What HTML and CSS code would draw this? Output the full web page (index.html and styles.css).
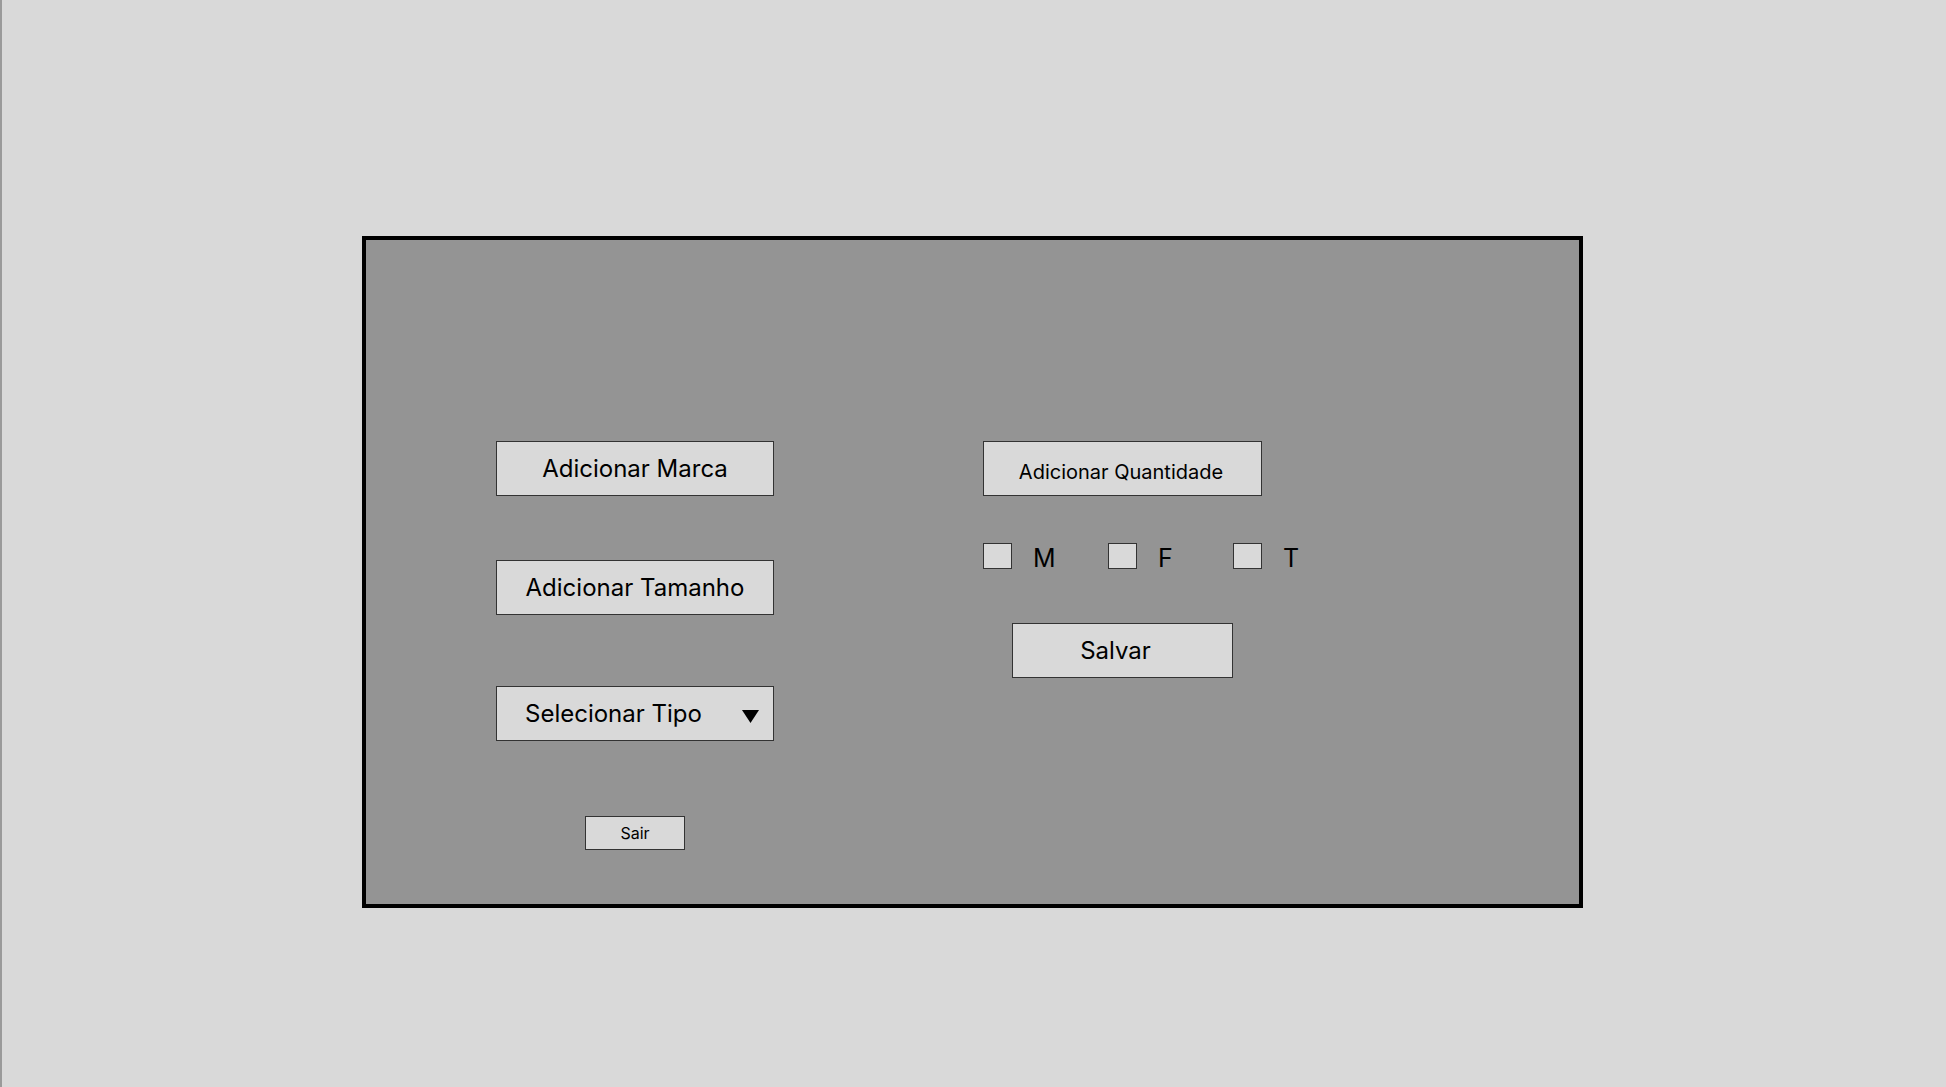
FILE: index.html
```html
<!DOCTYPE html>
<html lang="pt">
<head>
<meta charset="utf-8">
<title>Cadastro</title>
<link rel="stylesheet" href="styles.css">
</head>
<body>
<div class="page">
  <div class="panel">
    <div class="col-left">
      <button class="btn btn-lg">Adicionar Marca</button>
      <button class="btn btn-lg gap-tamanho">Adicionar Tamanho</button>
      <div class="btn select gap-tipo">
        <span>Selecionar Tipo</span>
        <svg class="caret" width="17" height="13" viewBox="0 0 17 13"><polygon points="0,0 17,0 8.5,13" fill="#000"/></svg>
      </div>
      <button class="btn btn-sm gap-sair">Sair</button>
    </div>
    <div class="col-right">
      <button class="btn btn-qty">Adicionar Quantidade</button>
      <div class="checks">
        <label class="check"><span class="box"></span><span class="lbl">M</span></label>
        <label class="check"><span class="box"></span><span class="lbl">F</span></label>
        <label class="check"><span class="box"></span><span class="lbl">T</span></label>
      </div>
      <button class="btn btn-save">Salvar</button>
    </div>
  </div>
</div>
</body>
</html>
```

FILE: styles.css
```css
html, body {
  margin: 0;
  padding: 0;
}
body {
  background: #d9d9d9;
  font-family: Inter, "Noto Sans", sans-serif;
  color: #000;
}
.page {
  width: 1946px;
  height: 1087px;
  box-sizing: border-box;
  border-left: 2px solid #9a9a9a;
  padding-left: 360px;
  padding-top: 236px;
}
.panel {
  width: 1221px;
  height: 672px;
  box-sizing: border-box;
  border: 4px solid #000;
  background: #949494;
  display: flex;
  padding-left: 130px;
  padding-top: 201px;
  gap: 209px;
}
.btn {
  box-sizing: border-box;
  background: #d9d9d9;
  border: 1.5px solid #333;
  font-family: Inter, "Noto Sans", sans-serif;
  color: #000;
  padding: 0;
  margin: 0;
  display: flex;
  align-items: center;
  justify-content: center;
}
.col-left {
  width: 278px;
  display: flex;
  flex-direction: column;
  align-items: center;
}
.btn-lg {
  width: 278px;
  height: 55px;
  font-size: 24px;
}
.gap-tamanho { margin-top: 64px; }
.select {
  width: 278px;
  height: 55px;
  font-size: 24px;
  justify-content: space-between;
  padding-left: 28px;
  padding-right: 14px;
}
.select .caret { margin-top: 6px; }
.gap-tipo { margin-top: 71px; }
.btn-sm {
  width: 100px;
  height: 34px;
  font-size: 16px;
  padding-bottom: 1px;
}
.gap-sair { margin-top: 75px; }
.col-right {
  display: flex;
  flex-direction: column;
}
.btn-qty {
  width: 279px;
  height: 55px;
  font-size: 20px;
  padding-top: 6px;
  padding-right: 3px;
}
.checks {
  display: flex;
  margin-top: 47px;
  height: 26px;
}
.check {
  width: 125px;
  display: flex;
  align-items: center;
}
.box {
  width: 29px;
  height: 26px;
  box-sizing: border-box;
  background: #d9d9d9;
  border: 1.5px solid #333;
}
.lbl {
  margin-left: 21px;
  font-size: 25px;
  line-height: 26px;
  padding-top: 3px;
}
.btn-save {
  width: 221px;
  height: 55px;
  margin-top: 54px;
  margin-left: 29px;
  font-size: 24px;
  padding-right: 14px;
}
```
